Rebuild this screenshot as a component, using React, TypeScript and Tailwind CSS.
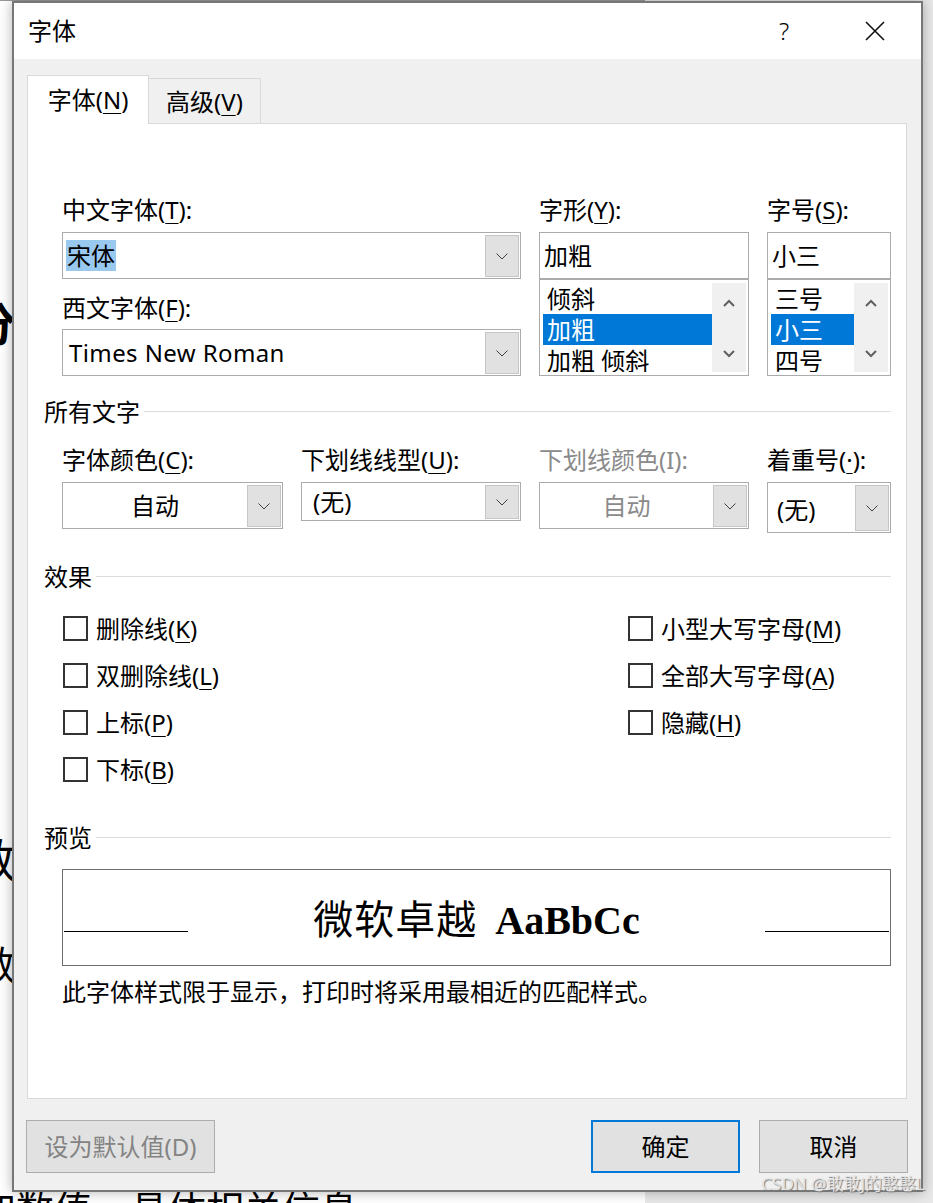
import React from "react";

const UI = "font-['Noto_Sans','Noto_Sans_CJK_SC',sans-serif]";

function U({ children }: { children: React.ReactNode }) {
  return <span className="underline decoration-1 underline-offset-[4px]">{children}</span>;
}

function DropArrow() {
  return (
    <svg width="12" height="7" viewBox="0 0 12 7">
      <path d="M0.5 0.5 6 6 11.5 0.5" fill="none" stroke="#404040" strokeWidth="1" />
    </svg>
  );
}

function ScrollArrow({ up }: { up?: boolean }) {
  return (
    <svg width="12" height="8" viewBox="0 0 12 8">
      <path
        d={up ? "M1 7 6 2 11 7" : "M1 1 6 6 11 1"}
        fill="none"
        stroke="#606060"
        strokeWidth="2"
      />
    </svg>
  );
}

function Combo({
  h,
  children,
  center,
}: {
  h: string;
  children: React.ReactNode;
  center?: boolean;
}) {
  return (
    <div className={`flex ${h} border border-[#ababab] bg-white`}>
      <div className={`flex-1 flex items-center leading-none ${center ? "justify-center" : "pl-[4px]"}`}>
        {children}
      </div>
      <div className="w-[34px] mt-[2px] mb-px mr-px border border-[#c6c6c6] bg-[#e1e1e1] flex items-center justify-center">
        <DropArrow />
      </div>
    </div>
  );
}

function ListBox({ items, sel }: { items: string[]; sel: number }) {
  return (
    <div className="flex h-[97px] border border-[#ababab] bg-white pl-[3px] pr-[2px] py-[3px]">
      <div className="flex-1 flex flex-col overflow-hidden">
        {items.map((it, i) => (
          <div
            key={i}
            className={`h-[31px] shrink-0 flex items-center pl-[4px] leading-none whitespace-pre ${
              i === sel ? "bg-[#0078d7] text-white" : ""
            }`}
          >
            {it}
          </div>
        ))}
      </div>
      <div className="w-[34px] bg-[#f0f0f0] flex flex-col items-center justify-between pt-[16px] pb-[14px]">
        <ScrollArrow up />
        <ScrollArrow />
      </div>
    </div>
  );
}

function Heading({ text, mt }: { text: string; mt: string }) {
  return (
    <div className={`flex items-center h-[28px] ${mt}`}>
      <span className="leading-none">{text}</span>
      <div className="flex-1 h-px bg-[#dcdcdc] ml-[4px] -mt-px" />
    </div>
  );
}

function Check({ children }: { children: React.ReactNode }) {
  return (
    <div className="h-[47px] flex items-center">
      <div className="ml-px w-[25px] h-[25px] border-2 border-[#333] bg-white" />
      <span className="ml-[8px] leading-none">{children}</span>
    </div>
  );
}

function Label({ children, muted }: { children: React.ReactNode; muted?: boolean }) {
  return (
    <div className={`h-[28px] flex items-center leading-none whitespace-nowrap ${muted ? "text-[#8a8a8a]" : ""}`}>
      {children}
    </div>
  );
}

export default function App() {
  return (
    <div className={`relative w-[933px] h-[1203px] overflow-hidden bg-[#e8e8e8] ${UI}`}>
      {/* document behind the dialog */}
      <div className="absolute left-0 top-0 w-[645px] h-[1203px] bg-white border-t border-[#9a9a9a] overflow-hidden font-['Liberation_Serif','Noto_Sans_CJK_SC',serif] text-black">
        <span className="absolute left-[-30px] top-[302px] text-[46px] font-bold leading-none">分</span>
        <span className="absolute left-[-30px] top-[838px] text-[46px] leading-none">数</span>
        <span className="absolute left-[-24px] top-[946px] text-[40px] leading-none">数</span>
        <span className="absolute left-[-22px] top-[1190px] text-[38px] leading-none whitespace-nowrap">
          加数值，具体相关信息
        </span>
      </div>

      {/* dialog window */}
      <div className="absolute left-[12px] top-[1px] w-[911px] h-[1191px] border-2 border-[#777] bg-[#f0f0f0] flex flex-col text-[24px] text-black shadow-[0_0_12px_rgba(0,0,0,0.3)]">
        <div className="h-[56px] shrink-0 bg-white flex items-center pl-[14px]">
          <span className="flex-1 leading-none">字体</span>
          <span className="w-[88px] text-center leading-none font-light">?</span>
          <div className="w-[93px] flex justify-center">
            <svg width="20" height="20" viewBox="0 0 20 20">
              <path d="M1 1 19 19M19 1 1 19" stroke="#111" strokeWidth="1.6" />
            </svg>
          </div>
        </div>

        <div className="flex-1 flex flex-col pl-[13px] pr-[14px] pt-[16px] pb-[17px]">
          {/* tabs */}
          <div className="flex items-end -mb-px relative z-10">
            <div className="w-[122px] h-[49px] bg-white border border-b-0 border-[#d9d9d9] flex items-center justify-center leading-none">
              字体(<U>N</U>)
            </div>
            <div className="w-[112px] h-[46px] border border-l-0 border-b-0 border-[#d9d9d9] flex items-center justify-center leading-none">
              高级(<U>V</U>)
            </div>
          </div>

          {/* panel */}
          <div className="flex-1 border border-[#d9d9d9] bg-white pl-[16px] pr-[15px] pt-[72px]">
            <div className="flex ml-[18px]">
              <div className="w-[459px]">
                <Label>
                  中文字体(<U>T</U>):
                </Label>
                <div className="mt-[8px]">
                  <Combo h="h-[47px]">
                    <span className="bg-[#99c9ef] h-[31px] flex items-center px-px -ml-px">宋体</span>
                  </Combo>
                </div>
                <div className="mt-[15px]">
                  <Label>
                    西文字体(<U>F</U>):
                  </Label>
                </div>
                <div className="mt-[7px]">
                  <Combo h="h-[47px]">
                    <span className="pl-[2px] tracking-[0.4px]">Times New Roman</span>
                  </Combo>
                </div>
              </div>
              <div className="w-[210px] ml-[18px]">
                <Label>
                  字形(<U>Y</U>):
                </Label>
                <div className="mt-[8px] h-[47px] border border-[#ababab] flex items-center pl-[4px] leading-none">
                  加粗
                </div>
                <ListBox items={["倾斜", "加粗", "加粗 倾斜"]} sel={1} />
              </div>
              <div className="w-[124px] ml-[18px]">
                <Label>
                  字号(<U>S</U>):
                </Label>
                <div className="mt-[8px] h-[47px] border border-[#ababab] flex items-center pl-[4px] leading-none">
                  小三
                </div>
                <ListBox items={["三号", "小三", "四号"]} sel={1} />
              </div>
            </div>

            <Heading text="所有文字" mt="mt-[22px]" />

            <div className="flex items-start ml-[18px] mt-[20px]">
              <div className="w-[221px]">
                <Label>
                  字体颜色(<U>C</U>):
                </Label>
                <div className="mt-[8px]">
                  <Combo h="h-[47px]" center>
                    自动
                  </Combo>
                </div>
              </div>
              <div className="w-[220px] ml-[18px]">
                <Label>
                  下划线线型(<U>U</U>):
                </Label>
                <div className="mt-[8px]">
                  <Combo h="h-[39px]">
                    <span className="pl-[7px]">(无)</span>
                  </Combo>
                </div>
              </div>
              <div className="w-[210px] ml-[18px]">
                <Label muted>下划线颜色(I):</Label>
                <div className="mt-[8px] text-[#8a8a8a]">
                  <Combo h="h-[47px]" center>
                    自动
                  </Combo>
                </div>
              </div>
              <div className="w-[124px] ml-[18px]">
                <Label>
                  着重号(<U>·</U>):
                </Label>
                <div className="mt-[8px]">
                  <Combo h="h-[51px]">
                    <span className="pl-[5px] pt-[4px]">(无)</span>
                  </Combo>
                </div>
              </div>
            </div>

            <Heading text="效果" mt="mt-[30px]" />

            <div className="flex ml-[18px] mt-[14px]">
              <div className="w-[565px]">
                <Check>
                  删除线(<U>K</U>)
                </Check>
                <Check>
                  双删除线(<U>L</U>)
                </Check>
                <Check>
                  上标(<U>P</U>)
                </Check>
                <Check>
                  下标(<U>B</U>)
                </Check>
              </div>
              <div>
                <Check>
                  小型大写字母(<U>M</U>)
                </Check>
                <Check>
                  全部大写字母(<U>A</U>)
                </Check>
                <Check>
                  隐藏(<U>H</U>)
                </Check>
              </div>
            </div>

            <Heading text="预览" mt="mt-[31px]" />

            <div className="ml-[18px] mt-[17px] h-[97px] border border-[#6e6e6e] flex items-center justify-between px-px">
              <div className="w-[124px] h-px bg-black mt-[28px]" />
              <span className="text-[40px] leading-[40px] whitespace-nowrap mt-[2px] flex items-baseline">
                <span className="font-['Noto_Sans_CJK_SC',serif] tracking-[1px]">微软卓越</span>
                <span className="font-['Liberation_Serif',serif] font-bold ml-[18px]">AaBbCc</span>
              </span>
              <div className="w-[124px] h-px bg-black mt-[28px]" />
            </div>

            <div className="ml-[18px] mt-[12px] h-[28px] flex items-center leading-none">
              此字体样式限于显示，打印时将采用最相近的匹配样式。
            </div>
          </div>

          {/* buttons */}
          <div className="flex mt-[21px] -ml-px">
            <div className="w-[189px] h-[53px] border border-[#adadad] bg-[#e1e1e1] text-[#838383] flex items-center justify-center leading-none">
              设为默认值(D)
            </div>
            <div className="flex-1" />
            <div className="w-[149px] h-[53px] border-2 border-[#0078d7] bg-[#e1e1e1] flex items-center justify-center leading-none">
              确定
            </div>
            <div className="w-[149px] h-[53px] ml-[19px] -mr-px border border-[#adadad] bg-[#e1e1e1] flex items-center justify-center leading-none">
              取消
            </div>
          </div>
        </div>
      </div>

      {/* watermark */}
      <div className="absolute right-[8px] top-[1175px] text-[17px] leading-none text-[#e4e4e4] [text-shadow:1px_1px_1px_#777] font-['Noto_Sans','Noto_Sans_CJK_SC',sans-serif]">
        CSDN @敢敢J的憨憨L
      </div>
    </div>
  );
}
